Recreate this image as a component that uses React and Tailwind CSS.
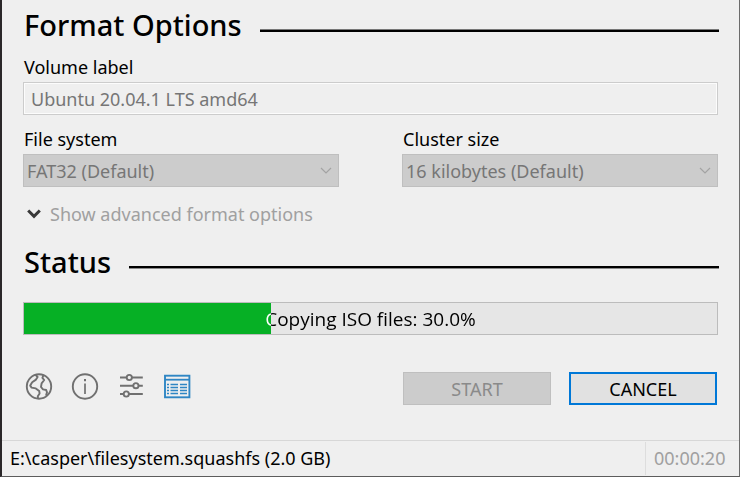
import React from "react";

const progress = 35.6;

function SectionHeading({ children, rule }) {
  return (
    <div className="-mr-px flex h-10 items-center gap-[18px] pl-px">
      <h2 className="text-[29px] leading-10 font-medium">{children}</h2>
      <div className={rule} />
    </div>
  );
}

function SelectField({ id, label, value }) {
  return (
    <div className="flex flex-1 flex-col gap-[3px]">
      <label htmlFor={id} className="pl-px leading-6">{label}</label>
      <div className="relative">
        <select
          id={id}
          disabled
          defaultValue={value}
          className="block h-[33px] w-full appearance-none border border-[#bfbfbf] bg-[#cccccc] px-[3px] pt-px leading-6 text-[#767676] opacity-100"
        >
          <option>{value}</option>
        </select>
        <svg viewBox="0 0 12 8" className="pointer-events-none absolute top-[13px] right-[7px] h-2 w-3" fill="none" stroke="#a3a3a3" strokeWidth="1.2">
          <path d="M1 1l5 5 5-5" />
        </svg>
      </div>
    </div>
  );
}

function IconButton({ label, children }) {
  return (
    <button type="button" aria-label={label} className="h-7 w-7">
      {children}
    </button>
  );
}

function GlobeIcon() {
  return (
    <svg viewBox="0 0 28 28" className="h-7 w-7" fill="none" stroke="#707070" strokeWidth="1.9" strokeLinejoin="round">
      <circle cx="14" cy="14.5" r="12.2" />
      <path d="M10.6 2.8L12.6 5 11 7.6 7.2 10.2 5.2 13.6l1.4 2 4.2.8 3.4 2.6.4 2.4-1.8 2.8.2 2.4" />
      <path d="M18.4 3.2l-1 2.6 1.8 2.2-2.6 3.4-.6 3.6 2 2.4 3.2.6.8 2.4-1 3.2" />
    </svg>
  );
}

function InfoIcon() {
  return (
    <svg viewBox="0 0 28 28" className="h-7 w-7" fill="none" stroke="#707070" strokeWidth="1.9">
      <circle cx="14" cy="14.5" r="12.2" />
      <path d="M14 11.5v10.5" strokeWidth="1.7" />
      <path d="M14 7v2.2" strokeWidth="2" />
    </svg>
  );
}

function SlidersIcon() {
  return (
    <svg viewBox="0 0 28 28" className="h-7 w-7" fill="none" stroke="#707070" strokeWidth="1.9">
      <path d="M3 5.5h6.6M15 5.5h10.8M3 13.7h13.2M21.6 13.7h4.2M3 22h3.6M12 22h13.8" />
      <circle cx="12.3" cy="5.5" r="2.6" />
      <circle cx="18.9" cy="13.7" r="2.6" />
      <circle cx="9.3" cy="22" r="2.6" />
    </svg>
  );
}

function LogIcon() {
  return (
    <svg viewBox="0 0 28 28" className="h-7 w-7" fill="none" stroke="#2f86c4">
      <rect x="2" y="3.7" width="24.4" height="21.6" strokeWidth="1.9" />
      <path d="M2 7.7h24" strokeWidth="1.8" />
      <path d="M4 12.5h2M4 15.5h2M4 18.5h2M4 21.5h2M7.5 12.5h7.5M7.5 15.5h7.5M7.5 18.5h7.5M7.5 21.5h7.5M17 12.5h7M17 15.5h7M17 18.5h7M17 21.5h7" strokeWidth="1.6" />
    </svg>
  );
}

export default function App() {
  return (
    <div className="flex min-h-screen flex-col border-r border-b border-l-2 border-r-[#6b6b6b] border-b-[#5c5c5c] border-l-[#2a2729] bg-[#efefef] font-['Noto_Sans','Open_Sans',sans-serif] text-[18px] text-black">
      <main className="flex flex-1 flex-col pt-[5px] pr-[21px] pb-[35px] pl-[21px]">
        <SectionHeading rule="mt-[11px] h-[3px] flex-1 border-t border-[#777777] bg-black">Format Options</SectionHeading>

        <div className="mt-[10px] flex flex-col gap-[3px]">
          <label htmlFor="volume" className="pl-px leading-6">Volume label</label>
          <input
            id="volume"
            type="text"
            disabled
            defaultValue="Ubuntu 20.04.1 LTS amd64"
            className="h-[33px] w-full border border-[#cccccc] bg-[#efefef] px-[7px] leading-6 text-[#767676] shadow-[inset_0_0_0_1px_#fcfcfc]"
          />
        </div>

        <div className="mt-3 flex gap-[63px]">
          <SelectField id="filesystem" label="File system" value="FAT32 (Default)" />
          <SelectField id="cluster" label="Cluster size" value="16 kilobytes (Default)" />
        </div>

        <button type="button" disabled className="mt-[15px] flex items-center gap-[9px] self-start pl-1 leading-6 text-[#a0a0a0]">
          <svg viewBox="0 0 14 10" className="h-[10px] w-[14px]" fill="none" stroke="#383838" strokeWidth="3">
            <path d="M1.2 1.5L7 7.3l5.8-5.8" />
          </svg>
          Show advanced format options
        </button>

        <div className="mt-4">
          <SectionHeading rule="mt-[11px] h-[3px] flex-1 border-b border-[#8a8a8a] bg-black">Status</SectionHeading>
        </div>

        <div
          role="progressbar"
          aria-valuenow={progress}
          aria-valuemin={0}
          aria-valuemax={100}
          className="relative mt-5 h-[33px] border border-[#bcbcbc] bg-[#e6e6e6]"
        >
          <div className="h-full bg-[#06b025]" style={{ width: `${progress}%` }} />
          <div
            className="absolute inset-0 bg-clip-text text-center font-['Open_Sans','Noto_Sans',sans-serif] text-[19px] leading-[33px] text-transparent"
            style={{ backgroundImage: `linear-gradient(to right, #fff ${progress}%, #000 ${progress}%)` }}
          >
            Copying ISO files: 30.0%
          </div>
        </div>

        <div className="mt-[37px] flex items-start justify-between">
          <div className="flex gap-[18px] pl-[2px]">
            <IconButton label="Language"><GlobeIcon /></IconButton>
            <IconButton label="About"><InfoIcon /></IconButton>
            <IconButton label="Settings"><SlidersIcon /></IconButton>
            <IconButton label="Log"><LogIcon /></IconButton>
          </div>
          <div className="flex gap-[18px] pr-px">
            <button type="button" disabled className="h-[33px] w-[148px] border border-[#bfbfbf] bg-[#cccccc] pt-px text-[#8a8a8a]">START</button>
            <button type="button" className="h-[33px] w-[148px] border-2 border-[#0078d7] bg-[#e1e1e1] pt-px">CANCEL</button>
          </div>
        </div>
      </main>

      <footer className="flex h-[36px] items-stretch border-t border-[#d7d7d7] leading-[35px]">
        <span className="flex-1 pl-2">E:\casper\filesystem.squashfs (2.0 GB)</span>
        <span className="my-px flex w-[94px] items-center border-l border-[#dddddd] pl-2 text-[#a0a0a0]">00:00:20</span>
      </footer>
    </div>
  );
}
